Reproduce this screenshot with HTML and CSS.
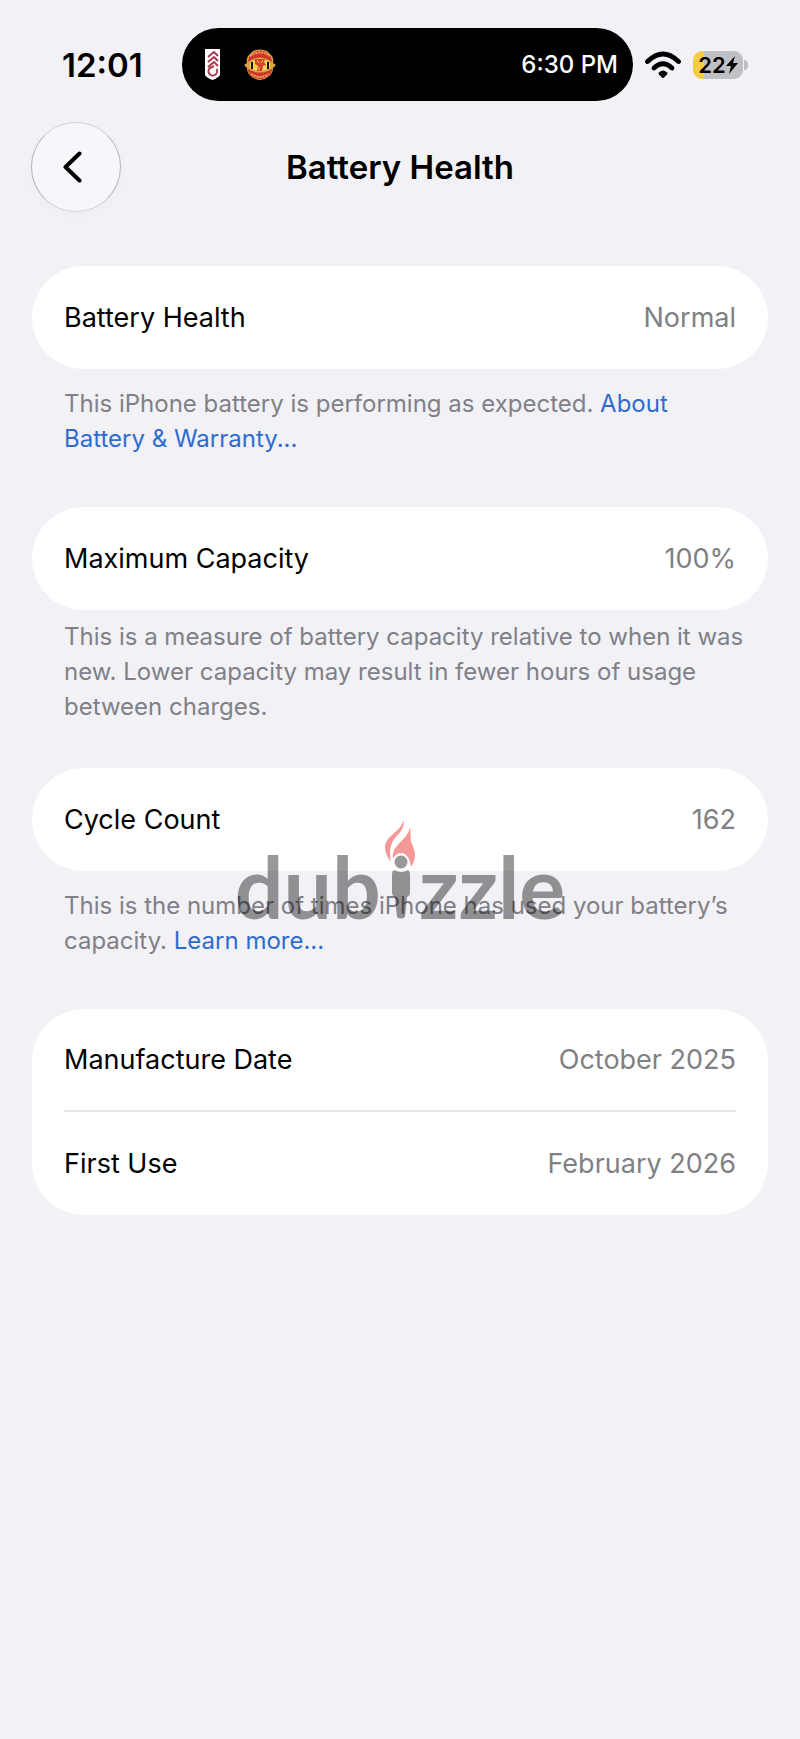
FILE: index.html
```html
<!DOCTYPE html>
<html lang="en">
<head>
<meta charset="utf-8">
<meta name="viewport" content="width=device-width, initial-scale=1">
<title>Battery Health</title>
<link rel="stylesheet" href="styles.css">
</head>
<body>
<div class="status">
  <time class="clock">12:01</time>
  <div class="island">
    <svg class="crest-fulham" viewBox="0 0 15 31" aria-label="Fulham">
      <path d="M0 0H15V26Q13 29 7.500 31Q2 29 0 26Z" fill="#fff"/>
      <path d="M3 8L9 3L13 7M3 13L9 8L13 12M3 18L9 13L13 17M11.500 20A4.300 4.300 0 1 1 5 19L9 17" fill="none" stroke="#a83a4c" stroke-width="2"/>
    </svg>
    <svg class="crest-united" viewBox="0 0 32 32" aria-label="Manchester United">
      <path d="M9 2Q16-1 23 2L28 7Q30 11 29 14L32 16L29 19Q29 25 24 28Q16 34 8 28Q3 25 3 19L0 16L3 14Q2 11 4 7Z" fill="#d9a441"/>
      <path d="M10 3Q16 0 22 3L27 8L28 13Q16 4 4 13L5 8Z" fill="#cf352b"/>
      <path d="M4 20Q16 27 28 20Q28 25 23 28Q16 32 9 28Q4 25 4 20Z" fill="#cf352b"/>
      <path d="M6 7Q16 0 26 7M7 25Q16 31 25 25" fill="none" stroke="#eda860" stroke-width="2" stroke-dasharray="2 1"/>
      <path d="M6 14Q16 6 26 14V19Q16 25 6 19Z" fill="#f3d255"/>
      <path d="M7 13H9V20H7ZM23 13H25V20H23Z" fill="#16140c"/>
      <path d="M11 10H21L20 13L22 16L19 17L18 22H13L14 17L11 15Z" fill="#d5432b"/>
      <path d="M13 11L15 14M19 11L17 14M15 18V21" stroke="#f3d255"/>
    </svg>
    <span class="event">6:30 PM</span>
  </div>
  <div class="indicators">
    <svg class="wifi" viewBox="0 0 36 28" aria-label="Wi-Fi">
      <path d="M2.500 10.500Q18-4.500 33.500 10.500" fill="none" stroke="#000" stroke-width="4.800" stroke-linecap="round"/>
      <path d="M9 17Q18 8.500 27 17" fill="none" stroke="#000" stroke-width="4.800" stroke-linecap="round"/>
      <path d="M14 21.500Q18 17.500 22 21.500Q23 22.500 22 23.500L19 26.500Q18 27.500 17 26.500L14 23.500Q13 22.500 14 21.500Z"/>
    </svg>
    <div class="battery">
      <span>22</span>
      <svg class="bolt" viewBox="0 0 12 18" aria-label="Charging"><path d="M9 0L0 10H5L3 18L12 7H7Z"/></svg>
    </div>
    <i class="battery-cap"></i>
  </div>
</div>

<header class="nav">
  <button class="back" type="button" aria-label="Back">
    <svg viewBox="0 0 20 32"><path d="M16.500 2.500L2.500 16L16.500 29.500" fill="none" stroke="#000" stroke-width="4" stroke-linecap="round" stroke-linejoin="round"/></svg>
  </button>
  <h1>Battery Health</h1>
</header>

<main>
  <section>
    <div class="card"><div class="row"><span>Battery Health</span><span class="value">Normal</span></div></div>
    <p class="note">This iPhone battery is performing as expected. <a href="#">About Battery &amp; Warranty...</a></p>
  </section>
  <section class="tight">
    <div class="card"><div class="row"><span>Maximum Capacity</span><span class="value">100%</span></div></div>
    <p class="note">This is a measure of battery capacity relative to when it was new. Lower capacity may result in fewer hours of usage between charges.</p>
  </section>
  <section class="marked">
    <div class="card"><div class="row"><span>Cycle Count</span><span class="value">162</span></div></div>
    <p class="note">This is the number of times iPhone has used your battery’s capacity. <a href="#">Learn more...</a></p>
    <div class="watermark">
      <span>dub</span>
      <svg viewBox="0 0 30 99" aria-label="i">
        <path d="M18.500 0C20 9 14 13 10 18C5 24 4 33 6 42C2 37 0 32 0 27C1 15 16 12 18.500 0Z" fill="#e80000"/>
        <path d="M25 7C26 12 25 17 26 21C28 27 30 30 30 35C30 40 28 44 26 47C25 38 21 33 16 33C12 33 9 36 8 39C6 24 22 22 25 7Z" fill="#e80000"/>
        <circle cx="16" cy="42" r="6.500"/>
        <path d="M9 50Q16 54 23 50Q25 51 25 55V72Q25 76 22 77L20 97Q16 100 12 97L10 77Q7 76 7 72V55Q7 51 9 50Z"/>
      </svg>
      <span>zzle</span>
    </div>
  </section>
  <section>
    <div class="card">
      <div class="row divided"><span>Manufacture Date</span><span class="value">October 2025</span></div>
      <div class="row"><span>First Use</span><span class="value">February 2026</span></div>
    </div>
  </section>
</main>
</body>
</html>
```

FILE: styles.css
```css
* { box-sizing: border-box; }
body {
  margin: 0;
  min-height: 100vh;
  background: #f1f1f6;
  color: #000;
  font-family: Inter, "Liberation Sans", sans-serif;
}
.status {
  display: grid;
  grid-template-columns: 182px 1fr 167px;
  align-items: center;
  padding-top: 28px;
}
.clock { padding-left: 62px; font-size: 33px; font-weight: 600; }
.island {
  display: flex;
  align-items: center;
  height: 73px;
  padding: 0 15px 0 23px;
  border-radius: 37px;
  background: #000;
  color: #fff;
}
.crest-fulham { width: 15px; height: 31px; }
.crest-united { width: 32px; height: 32px; margin-left: 24px; }
.event { margin-left: auto; font-size: 24px; font-weight: 500; }
.indicators { display: flex; align-items: center; padding-left: 12px; }
.wifi { width: 36px; height: 28px; }
.battery {
  display: flex;
  align-items: center;
  justify-content: center;
  gap: 0;
  width: 50px;
  height: 28px;
  margin-left: 12px;
  border-radius: 9px;
  background: linear-gradient(90deg, #f4cb45 11px, #bfbfc4 11px);
  font-size: 22px;
  font-weight: 600;
}
.bolt { flex: none; width: 12px; height: 18px; }
.battery-cap { width: 4px; height: 10px; margin-left: 1px; border-radius: 0 5px 5px 0; background: #bfbfc4; }
.nav {
  display: grid;
  grid-template-columns: 90px 1fr 90px;
  align-items: center;
  padding: 21px 31px 0;
}
.back {
  display: grid;
  place-items: center;
  width: 90px;
  height: 90px;
  padding: 0 6px 0 0;
  border: 1px solid #b9b9be;
  border-top-color: #d4d4d9;
  border-bottom-color: #d4d4d9;
  border-radius: 50%;
  background: #f6f6fb;
  box-shadow: 0 4px 14px rgb(0 0 0 / 2%);
}
.back svg { width: 20px; height: 32px; }
h1 { margin: 0; text-align: center; font-size: 33px; font-weight: 600; }
main { display: grid; gap: 50px; padding: 54px 32px 0; }
.card { border-radius: 52px; background: #fff; }
.row {
  display: flex;
  align-items: center;
  justify-content: space-between;
  height: 103px;
  margin: 0 32px;
  font-size: 27px;
}
.divided { border-bottom: 2px solid #e5e5e7; }
.value { color: #808084; }
.note {
  margin: 17px 24px 0 32px;
  padding-bottom: 1px;
  color: #808086;
  font-size: 24px;
  line-height: 35px;
}
.tight { margin-bottom: -7px; }
.tight .note { margin-top: 9px; }
.note a { color: #2f6cd0; text-decoration: none; }
.marked { position: relative; }
.watermark {
  position: absolute;
  top: 52px;
  left: 0;
  right: 0;
  display: flex;
  align-items: last baseline;
  justify-content: center;
  gap: 4px;
  opacity: 0.4;
  pointer-events: none;
  font: 700 86px/99px Lato, sans-serif;
}
.watermark svg { width: 30px; height: 99px; }
```
